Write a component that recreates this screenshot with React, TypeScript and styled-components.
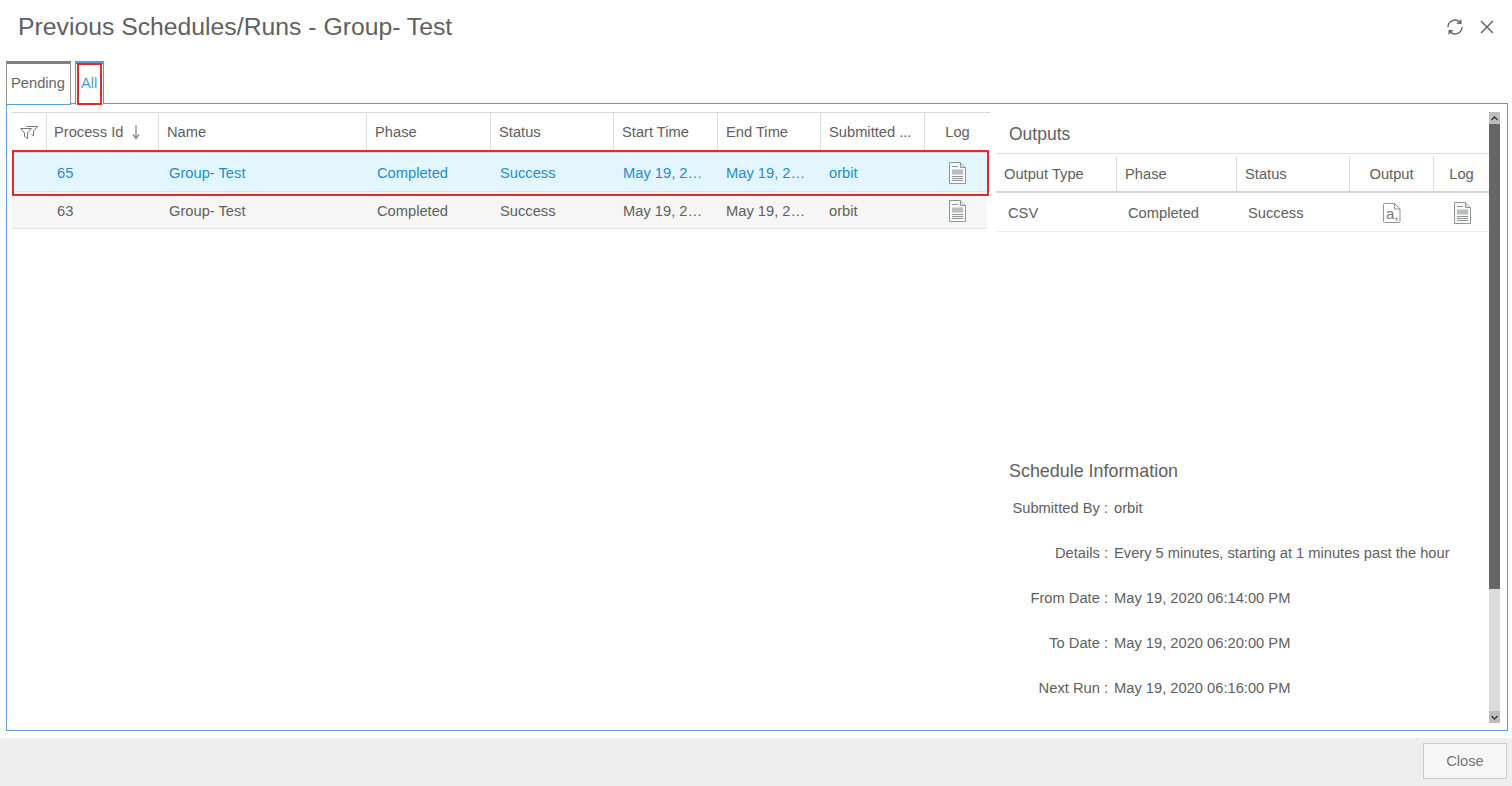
import { Fragment } from "react";
import styled, { createGlobalStyle } from "styled-components";

const GlobalStyle = createGlobalStyle`
	html, body {
		margin: 0;
		padding: 0;
		background: #fff;
		font-family: "Liberation Sans", Arial, sans-serif;
		color: #555;
	}
`;

const Page = styled.div`
	width: 1512px;
	height: 786px;
	display: flex;
	flex-direction: column;
	overflow: hidden;
`;

const Header = styled.div`
	height: 61px;
	flex: none;
	display: flex;
	align-items: flex-start;
	justify-content: space-between;
	padding: 12px 17px 0 18px;
	box-sizing: border-box;
`;

const Title = styled.h1`
	margin: 0;
	font-size: 24.75px;
	line-height: 30px;
	font-weight: 400;
	color: #606060;
`;

const HeaderIcons = styled.div`
	display: flex;
	align-items: center;
	gap: 15px;
	padding-top: 6px;
`;

const TabBar = styled.div`
	height: 43px;
	flex: none;
	display: flex;
	gap: 4px;
	padding-left: 6px;
	margin-bottom: -1px;
	position: relative;
	z-index: 1;
`;

const Tab = styled.div<{ $active?: boolean }>`
	position: relative;
	box-sizing: border-box;
	height: 44px;
	padding: 0 5px 3px 4px;
	display: flex;
	align-items: center;
	font-size: 14.7px;
	background: #fff;
	color: ${(p) => (p.$active ? "#4a9ad8" : "#666")};
	border: 1px solid ${(p) => (p.$active ? "#5b9bd5" : "#999")};
	border-top: 3px solid ${(p) => (p.$active ? "#5b9bd5" : "#808080")};
	border-bottom: ${(p) => (p.$active ? "1px solid #fff" : "1px solid #5b9bd5")};
`;

const AllTab = styled(Tab)`
	width: 29px;
	padding-left: 5px;
`;

const RedBox = styled.div`
	position: absolute;
	border: 2px solid #e02b2b;
	pointer-events: none;
	z-index: 2;
`;

const TabRedBox = styled(RedBox)`
	inset: -1px 1px -1px 1px;
`;

const RowRedBox = styled(RedBox)`
	top: 0;
	left: 0;
	right: 1px;
	height: 46px;
	box-sizing: border-box;
`;

const Panel = styled.div`
	height: 628px;
	margin: 0 4px 0 6px;
	flex: none;
	box-sizing: border-box;
	border: 1px solid #5b9bd5;
	display: flex;
	padding: 8px 7px 7px 5px;
`;

const LeftPane = styled.div`
	width: 978px;
	flex: none;
`;

const RightPane = styled.div`
	width: 493px;
	flex: none;
	margin-left: 6px;
`;

const runColumns = "35px 112px 208px 124px 123px 104px 103px 104px 65px";
const outputColumns = "121px 120px 113px 84px 55px";

const GridRow = styled.div<{ $cols: string }>`
	display: grid;
	grid-template-columns: ${(p) => p.$cols};
`;

const RunHead = styled(GridRow)`
	height: 38px;
	border-top: 1px solid #d8d8d8;
	box-sizing: border-box;
`;

const HeadCell = styled.div<{ $center?: boolean; $last?: boolean; $pad?: number }>`
	display: flex;
	align-items: center;
	justify-content: ${(p) => (p.$center ? "center" : "flex-start")};
	padding: ${(p) => (p.$center ? "0" : `0 ${p.$pad ?? 8}px`)};
	box-sizing: border-box;
	font-size: 14.7px;
	color: #606060;
	white-space: nowrap;
	overflow: hidden;
	border-right: ${(p) => (p.$last ? "none" : "1px solid #dcdcdc")};
`;

const SortArrow = styled.svg`
	margin-left: 8px;
	flex: none;
`;

const RunRows = styled.div`
	position: relative;
`;

const RunRow = styled(GridRow)<{ $selected?: boolean }>`
	box-sizing: border-box;
	width: 975px;
	height: ${(p) => (p.$selected ? "42px" : "37px")};
	padding-top: 1px;
	background: ${(p) => (p.$selected ? "#e3f5fe" : "#f6f6f6")};
	border-top: ${(p) => (p.$selected ? "3px solid #d5dadd" : "none")};
	border-bottom: 1px solid ${(p) => (p.$selected ? "#d9e4ea" : "#e4e4e4")};
	color: ${(p) => (p.$selected ? "#1a8fcf" : "#606060")};
`;

const Cell = styled.div<{ $center?: boolean; $indent?: number }>`
	display: flex;
	align-items: center;
	justify-content: ${(p) => (p.$center ? "center" : "flex-start")};
	padding-left: ${(p) => p.$indent ?? (p.$center ? 0 : 9)}px;
	font-size: 14.7px;
	white-space: nowrap;
	min-width: 0;
`;

const SectionTitle = styled.h2`
	margin: 0;
	padding: 2px 0 0 13px;
	font-size: 17.5px;
	line-height: 41px;
	height: 41px;
	box-sizing: border-box;
	font-weight: 400;
	color: #606060;
`;

const OutputHead = styled(GridRow)`
	height: 40px;
	box-sizing: border-box;
	padding-top: 2px;
	border-top: 1px solid #dcdcdc;
	border-bottom: 2px solid #d4d4d4;
`;

const OutputRow = styled(GridRow)`
	height: 39px;
	box-sizing: border-box;
	padding-top: 1px;
	border-bottom: 1px solid #ececec;
	color: #606060;
`;

const ScheduleInfo = styled.div`
	margin-top: 229px;
`;

const InfoTitle = styled(SectionTitle)`
	height: auto;
	padding-top: 0;
	font-size: 17.9px;
	line-height: 20px;
	margin-bottom: 18px;
`;

const InfoRows = styled.dl`
	margin: 0;
	display: grid;
	grid-template-columns: 112px 1fr;
	grid-auto-rows: 45px;
	font-size: 14.7px;
	color: #606060;
`;

const InfoLabel = styled.dt`
	text-align: right;
	line-height: 18px;
`;

const InfoValue = styled.dd`
	margin: 0 0 0 6px;
	line-height: 18px;
	white-space: nowrap;
`;

const Scrollbar = styled.div`
	width: 11px;
	height: 611px;
	flex: none;
	display: flex;
	flex-direction: column;
	background: #dcdcdc;
`;

const ScrollButton = styled.div`
	height: 12px;
	flex: none;
	background: #bdbdbd;
	display: flex;
	align-items: center;
	justify-content: center;
`;

const ScrollThumb = styled.div`
	height: 465px;
	flex: none;
	background: #666;
`;

const ScrollTrack = styled.div`
	flex: 1;
`;

const Footer = styled.div`
	margin-top: 7px;
	flex: 1;
	background: #eee;
	display: flex;
	justify-content: flex-end;
	align-items: flex-start;
	padding: 5px 5px 0 0;
`;

const CloseButton = styled.button`
	width: 84px;
	height: 36px;
	box-sizing: border-box;
	background: #f6f6f6;
	border: 1px solid #ccc;
	color: #777;
	font-family: inherit;
	font-size: 14.7px;
	cursor: pointer;
`;

const IconBox = styled.svg`
	display: block;
	flex: none;
`;

function RefreshIcon() {
	return (
		<IconBox width="18" height="18" viewBox="0 0 18 18" fill="none" stroke="#666" strokeWidth="1.4">
			<path d="M2 9a7 7 0 0 1 11.800-5" />
			<path d="M16 9a7 7 0 0 1-11.800 5" />
			<path d="M15.500 1v5h-5z" fill="#666" stroke="none" />
			<path d="M2.500 17v-5h5z" fill="#666" stroke="none" />
		</IconBox>
	);
}

function CloseIcon() {
	return (
		<IconBox width="16" height="16" viewBox="0 0 16 16" fill="none" stroke="#666" strokeWidth="1.5">
			<path d="M2 2l12 12M14 2L2 14" />
		</IconBox>
	);
}

function FilterIcon() {
	return (
		<IconBox width="18" height="14" viewBox="0 0 18 14" fill="none" stroke="#777" strokeWidth="1">
			<path d="M6.500 1.500h11l-4 4.500v5l-2-1.500" />
			<path d="M.5 3.500h11l-4 4.500v5.500l-3-2V8z" fill="#fff" />
		</IconBox>
	);
}

function LogIcon() {
	return (
		<IconBox width="17" height="22" viewBox="0 0 17 22" fill="#f7f8f8" stroke="#8f9496" strokeWidth="1">
			<path d="M.5.5h11l5 5v16H.5z" />
			<path d="M11.500.5v5h5" fill="#dfe1e2" />
			<path d="M3 4.500h6" strokeWidth="1" />
			<path d="M3 7.500h11v5H3z" fill="#b9bdbf" stroke="none" />
			<path d="M3 14.500h11M3 16.500h11M3 18.500h11" strokeWidth="1" />
		</IconBox>
	);
}

function CsvIcon() {
	return (
		<IconBox width="18" height="20" viewBox="0 0 18 20" fill="none" stroke="#909496" strokeWidth="1">
			<path d="M.5 1.500a1 1 0 0 1 1-1h10l5.500 5.500v12.500a1 1 0 0 1-1 1h-14.500a1 1 0 0 1-1-1z" />
			<path d="M11.500.5v5.500h5.500" />
			<text x="3" y="16" fontSize="15" fontFamily="Liberation Sans, sans-serif" fill="#777" stroke="none">a,</text>
		</IconBox>
	);
}

const IconNudge = styled.span<{ $x: number }>`
	display: block;
	margin-left: ${(p) => p.$x}px;
`;

const runHeaders = ["Name", "Phase", "Status", "Start Time", "End Time", "Submitted ..."];

const runs = [
	{ id: "65", selected: true },
	{ id: "63", selected: false },
];

const schedule = [
	["Submitted By :", "orbit"],
	["Details :", "Every 5 minutes, starting at 1 minutes past the hour"],
	["From Date :", "May 19, 2020 06:14:00 PM"],
	["To Date :", "May 19, 2020 06:20:00 PM"],
	["Next Run :", "May 19, 2020 06:16:00 PM"],
];

function App() {
	return (
		<Page>
			<GlobalStyle />
			<Header>
				<Title>Previous Schedules/Runs - Group- Test</Title>
				<HeaderIcons>
					<RefreshIcon />
					<CloseIcon />
				</HeaderIcons>
			</Header>
			<TabBar>
				<Tab>Pending</Tab>
				<AllTab $active>
					All
					<TabRedBox />
				</AllTab>
			</TabBar>
			<Panel>
				<LeftPane>
					<RunHead $cols={runColumns}>
						<HeadCell $center>
							<FilterIcon />
						</HeadCell>
						<HeadCell $pad={7}>
							Process Id
							<SortArrow width="10" height="16" viewBox="0 0 10 16" fill="none" stroke="#888" strokeWidth="1.3">
								<path d="M5 1v13M2 10.500l3 4 3-4" />
							</SortArrow>
						</HeadCell>
						{runHeaders.map((h) => (
							<HeadCell key={h}>{h}</HeadCell>
						))}
						<HeadCell $center $last>Log</HeadCell>
					</RunHead>
					<RunRows>
						{runs.map((r) => (
							<RunRow key={r.id} $cols={runColumns} $selected={r.selected}>
								<Cell />
								<Cell $indent={10}>{r.id}</Cell>
								<Cell $indent={10}>Group- Test</Cell>
								<Cell $indent={10}>Completed</Cell>
								<Cell>Success</Cell>
								<Cell>May 19, 2…</Cell>
								<Cell $indent={8}>May 19, 2…</Cell>
								<Cell $indent={8}>orbit</Cell>
								<Cell $center><LogIcon /></Cell>
							</RunRow>
						))}
						<RowRedBox />
					</RunRows>
				</LeftPane>
				<RightPane>
					<SectionTitle>Outputs</SectionTitle>
					<OutputHead $cols={outputColumns}>
						<HeadCell>Output Type</HeadCell>
						<HeadCell>Phase</HeadCell>
						<HeadCell>Status</HeadCell>
						<HeadCell $center>Output</HeadCell>
						<HeadCell $center $last>Log</HeadCell>
					</OutputHead>
					<OutputRow $cols={outputColumns}>
						<Cell $indent={12}>CSV</Cell>
						<Cell $indent={11}>Completed</Cell>
						<Cell $indent={11}>Success</Cell>
						<Cell $center><CsvIcon /></Cell>
						<Cell $center><IconNudge $x={2}><LogIcon /></IconNudge></Cell>
					</OutputRow>
					<ScheduleInfo>
						<InfoTitle>Schedule Information</InfoTitle>
						<InfoRows>
							{schedule.map(([label, value]) => (
								<Fragment key={label}>
									<InfoLabel>{label}</InfoLabel>
									<InfoValue>{value}</InfoValue>
								</Fragment>
							))}
						</InfoRows>
					</ScheduleInfo>
				</RightPane>
				<Scrollbar>
					<ScrollButton>
						<svg width="7" height="5" viewBox="0 0 7 5" fill="none" stroke="#333" strokeWidth="1.300">
							<path d="M.5 4l3-3 3 3" />
						</svg>
					</ScrollButton>
					<ScrollThumb />
					<ScrollTrack />
					<ScrollButton>
						<svg width="7" height="5" viewBox="0 0 7 5" fill="none" stroke="#333" strokeWidth="1.300">
							<path d="M.5 1l3 3 3-3" />
						</svg>
					</ScrollButton>
				</Scrollbar>
			</Panel>
			<Footer>
				<CloseButton>Close</CloseButton>
			</Footer>
		</Page>
	);
}

export default App;
